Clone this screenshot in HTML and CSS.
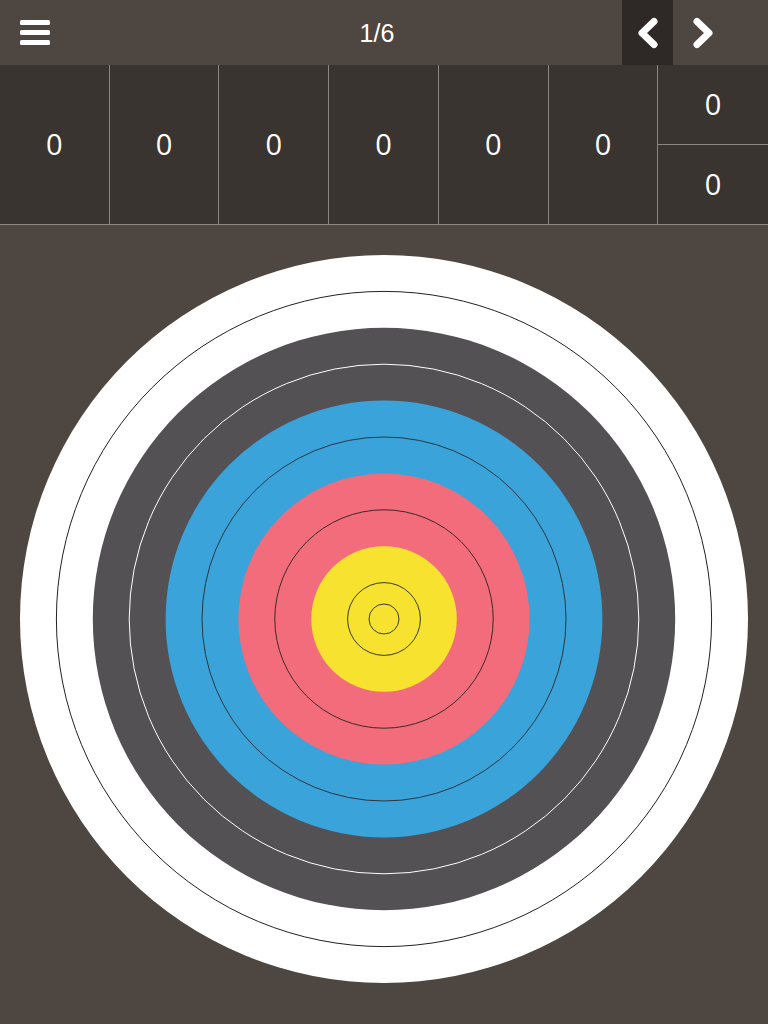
FILE: index.html
```html
<!DOCTYPE html>
<html>
<head>
<meta charset="utf-8">
<link rel="stylesheet" href="styles.css">
</head>
<body>
<header class="topbar">
  <div class="menu">
    <span class="bar"></span><span class="bar"></span><span class="bar"></span>
  </div>
  <div class="title">1/6</div>
  <div class="nav">
    <div class="navbtn prev">
      <svg width="24" height="36" viewBox="0 0 24 36"><path d="M18 6.5 L6 18 L18 29.5" fill="none" stroke="#fff" stroke-width="7" stroke-linecap="round" stroke-linejoin="round"/></svg>
    </div>
    <div class="navbtn next">
      <svg width="24" height="36" viewBox="0 0 24 36"><path d="M6 6.5 L18 18 L6 29.5" fill="none" stroke="#fff" stroke-width="7" stroke-linecap="round" stroke-linejoin="round"/></svg>
    </div>
    <div class="spacer"></div>
  </div>
</header>
<section class="scores">
  <div class="cell">0</div>
  <div class="cell">0</div>
  <div class="cell">0</div>
  <div class="cell">0</div>
  <div class="cell">0</div>
  <div class="cell">0</div>
  <div class="cell split">
    <div class="half">0</div>
    <div class="half">0</div>
  </div>
</section>
<main class="field">
  <svg class="target" width="728" height="728" viewBox="0 0 728 728">
    <g transform="translate(364 364)">
      <circle r="364" fill="#ffffff"/>
      <circle r="327.6" fill="none" stroke="#222" stroke-width="1"/>
      <circle r="291.2" fill="#535153"/>
      <circle r="254.8" fill="none" stroke="#fff" stroke-width="1"/>
      <circle r="218.4" fill="#3aa3da"/>
      <circle r="182" fill="none" stroke="#2a3640" stroke-width="1"/>
      <circle r="145.6" fill="#f26c7b"/>
      <circle r="109.2" fill="none" stroke="#3a2a2a" stroke-width="1"/>
      <circle r="72.8" fill="#f7e32f"/>
      <circle r="36.4" fill="none" stroke="#3a3a2a" stroke-width="1"/>
      <circle r="15" fill="none" stroke="#3a3a2a" stroke-width="1"/>
    </g>
  </svg>
</main>
</body>
</html>
```

FILE: styles.css
```css
html, body {
  margin: 0;
  padding: 0;
  background: #4d4641;
  font-family: "Liberation Sans", Arial, sans-serif;
  color: #fff;
}
.topbar {
  height: 65px;
  display: flex;
  align-items: stretch;
  background: #4d4641;
}
.menu {
  width: 132px;
  display: flex;
  flex-direction: column;
  justify-content: center;
  gap: 5px;
  padding-left: 20px;
  padding-bottom: 1px;
  box-sizing: border-box;
}
.bar {
  display: block;
  width: 30px;
  height: 5px;
  border-radius: 1.5px;
  background: #fff;
}
.title {
  flex: 1;
  display: flex;
  align-items: center;
  justify-content: center;
  font-size: 25px;
  padding-top: 1px;
}
.nav {
  display: flex;
  width: 146px;
}
.navbtn {
  display: flex;
  align-items: center;
  justify-content: center;
}
.prev {
  width: 51px;
  background: #2e2926;
}
.next {
  width: 60px;
}
.spacer {
  flex: 1;
}
.scores {
  display: grid;
  grid-template-columns: repeat(7, 1fr);
  height: 159px;
  background: #3a3430;
  border-bottom: 1px solid #8c8680;
  font-family: "Open Sans", "Liberation Sans", sans-serif;
  font-size: 29px;
}
.cell {
  display: flex;
  align-items: center;
  justify-content: center;
  border-right: 1px solid #8c8680;
  padding-bottom: 3px;
}
.cell.split {
  border-right: none;
  display: flex;
  flex-direction: column;
  align-items: stretch;
  padding-bottom: 0;
}
.half {
  flex: 1;
  display: flex;
  align-items: center;
  justify-content: center;
  padding-bottom: 2px;
}
.half + .half {
  border-top: 1px solid #8c8680;
}
.field {
  display: flex;
  justify-content: center;
  padding-top: 30px;
  height: 799px;
  box-sizing: border-box;
}
.target {
  display: block;
}
```
